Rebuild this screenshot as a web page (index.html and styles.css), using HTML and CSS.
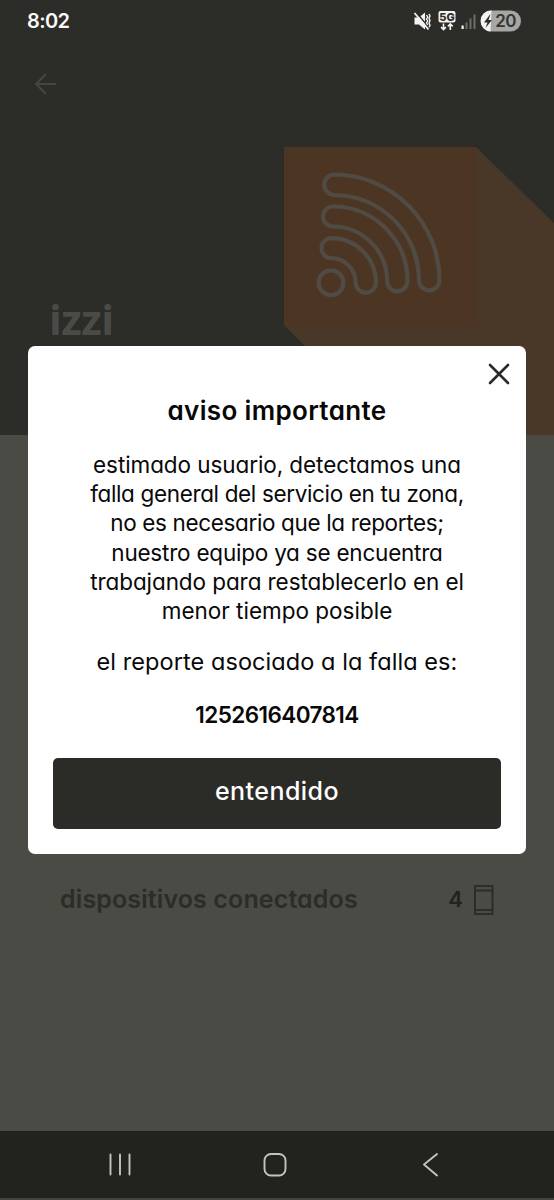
FILE: index.html
```html
<!DOCTYPE html>
<html lang="es">
<head>
<meta charset="utf-8">
<title>izzi</title>
<link rel="stylesheet" href="styles.css">
</head>
<body>
<div class="screen">
  <header class="hero">
    <div class="status">
      <span class="clock">8:02</span>
      <svg class="status-icons" width="110" height="26" viewBox="0 0 110 26">
        <path d="M3.500 9.500h4.500l6-5v17l-6-5H3.500z" fill="#f4f4f2"/>
        <path d="M5 4l14 17" stroke="#2c2c28" stroke-width="1.500"/>
        <path d="M3.500 5l14 16.500" stroke="#f4f4f2" stroke-width="1.800"/>
        <path d="M15.500 7l1.200 2-1.200 2 1.200 2-1.200 2 1.200 2M18 6l1 2-1 2.300 1 2.300-1 2.300 1 2.300-1 2" fill="none" stroke="#f4f4f2" stroke-width="1.400"/>
        <rect x="27.500" y="3" width="17" height="11.500" rx="2" fill="#f4f4f2"/>
        <text class="net" x="36" y="12.500" text-anchor="middle">5G</text>
        <path d="M32.500 15.500v6m-2.400-2.400 2.400 2.400 2.400-2.400M39.300 22v-6m-2.400 2.400 2.400-2.400 2.400 2.400" fill="none" stroke="#f4f4f2" stroke-width="1.600"/>
        <rect x="50.500" y="17.500" width="2.200" height="3.500" fill="#f4f4f2"/>
        <path d="M55.500 14.500V21M59.500 10.500V21M63.500 6.500V21" stroke="#6d6d69" stroke-width="2"/>
        <rect x="70" y="2.500" width="40" height="21" rx="10.500" fill="#a6a6a4"/>
        <path d="M80.500 2.500h-.5a10.500 10.500 0 0 0 0 21h-.5z" fill="#f4f4f2"/>
        <path d="M78 2.800v20.400" stroke="#f4f4f2"/>
        <path d="M79 6.500l-6 8h3.500l-2 5.500 6.500-8h-3.500l2-5.500z" fill="#2c2c28"/>
        <text class="charge" x="94.500" y="19" text-anchor="middle">20</text>
      </svg>
    </div>
    <svg class="back" width="24" height="24" viewBox="0 0 24 24"><path d="M22 12H2M12 2 2 12l10 10"/></svg>
    <svg class="art" width="270" height="288" viewBox="284 147 270 288">
      <path d="M284 147h192l78 76v212H393L284 325z" fill="#493728"/>
      <path d="M284 147h192v178H284z" fill="#4d3524"/>
      <g fill="none" stroke="#504b43" stroke-width="4.200">
        <circle cx="331" cy="282.700" r="12.400"/>
        <path d="M334.500 174.500A106 106 0 0 1 439.500 280a10.300 10.300 0 0 1-20.600 0A85 85 0 0 0 334.500 195a10.250 10.250 0 0 1 0-20.500z"/>
        <path d="M333 206.500A74.500 74.500 0 0 1 407.500 281a10.200 10.200 0 0 1-20.400 0A54.500 54.500 0 0 0 333 226.500a10 10 0 0 1 0-20z"/>
        <path d="M331.500 238.200A44.500 44.500 0 0 1 376 282.500a10.200 10.200 0 0 1-20.400 0A24.200 24.200 0 0 0 331.500 258.200a10 10 0 0 1 0-20z"/>
      </g>
    </svg>
    <h1 class="brand">izzi</h1>
  </header>
  <main class="content">
    <div class="devices">
      <span class="devices-label">dispositivos conectados</span>
      <span class="devices-count">4</span>
      <svg class="phone" width="20" height="32" viewBox="0 0 20 32"><path d="M1 3h17.500v28H1zM1 7.500h17.500M1 27h17.500"/></svg>
    </div>
  </main>
  <nav class="navbar">
    <svg width="554" height="67" viewBox="0 0 554 67"><g fill="none" stroke="#c4c4bf" stroke-width="1.900" stroke-linecap="round" stroke-linejoin="round"><path d="M110.500 23.500v20M120 23.500v20M129.500 23.500v20"/><rect x="264.500" y="23" width="21" height="21.500" rx="6.500"/><path d="M437 23 424 33.500 437 44.500"/></g></svg>
  </nav>
  <section class="dialog" role="dialog">
    <svg class="close" width="24" height="24" viewBox="0 0 24 24"><path d="M3 3l18 18M21 3 3 21"/></svg>
    <h2 class="title">aviso importante</h2>
    <p class="message">
      <span class="line l1">estimado usuario, detectamos una</span>
      <span class="line l2">falla general del servicio en tu zona,</span>
      <span class="line l3">no es necesario que la reportes;</span>
      <span class="line l4">nuestro equipo ya se encuentra</span>
      <span class="line l5">trabajando para restablecerlo en el</span>
      <span class="line l6">menor tiempo posible</span>
    </p>
    <p class="report">el reporte asociado a la falla es:</p>
    <p class="number">1252616407814</p>
    <button class="accept">entendido</button>
  </section>
</div>
</body>
</html>
```
FILE: styles.css
```css
* { box-sizing: border-box; margin: 0; padding: 0; }
body { font-family: Inter, "Open Sans", sans-serif; font-feature-settings: "cv11"; background: #4a4b45; }
.screen { position: relative; width: 554px; height: 1200px; overflow: hidden; display: flex; flex-direction: column; background: #4a4b45; }
.hero { position: relative; height: 435px; background: #2c2c28; }
.status { display: flex; justify-content: space-between; padding: 8px 33px 0 27px; height: 42px; }
.clock { font-size: 20px; font-weight: 600; line-height: 26px; letter-spacing: -0.6px; color: #fafaf8; }
.status-icons { display: block; }
.net { font-size: 11px; font-weight: 800; fill: #2c2c28; }
.charge { font-size: 17px; font-weight: 600; letter-spacing: -0.7px; fill: #343431; }
.back { display: block; margin: 30px 0 0 34px; fill: none; stroke: #464641; stroke-width: 2; }
.art { position: absolute; left: 284px; top: 147px; }
.brand { margin: 197px 0 0 49px; font: 700 42px/52px "Open Sans", sans-serif; letter-spacing: -0.5px; color: #4a4b46; }
.content { flex: 1; padding: 444px 60px 0; }
.devices { display: flex; align-items: center; height: 40px; color: #2c2c29; font-weight: 600; }
.devices-label { font-size: 25px; flex: 1; letter-spacing: 0.12px; white-space: nowrap; }
.devices-count { font-size: 22px; color: #22221f; margin-right: 11px; }
.phone { fill: none; stroke: #2c2c29; stroke-width: 2; }
.navbar { height: 69px; background: #22231e; border-bottom: 2px solid #43443f; }
.navbar svg { display: block; }
.dialog { position: absolute; left: 28px; top: 346px; width: 498px; height: 508px; padding: 47px 25px 25px; border-radius: 7px; background: #fff; color: #080808; text-align: center; }
.close { position: absolute; right: 15px; top: 16px; fill: none; stroke: #2a2a28; stroke-width: 2.6; stroke-linecap: round; }
.title { font-size: 26px; line-height: 36px; font-weight: 600; letter-spacing: 0.35px; }
.message { margin-top: 21px; font-size: 22.500px; line-height: 29.200px; }
.line { display: block; white-space: nowrap; }
.l1 { letter-spacing: -0.08px; }
.l2 { letter-spacing: -0.35px; }
.l3 { letter-spacing: -0.36px; }
.l4 { letter-spacing: -0.22px; }
.l5 { letter-spacing: -0.08px; }
.report { margin-top: 21px; font-size: 23.500px; line-height: 32px; letter-spacing: 0.07px; white-space: nowrap; }
.number { margin-top: 21px; font-size: 22.500px; line-height: 32px; font-weight: 600; letter-spacing: -0.58px; }
.accept { display: block; width: 448px; height: 71px; margin-top: 27px; padding-bottom: 6px; border: 0; border-radius: 5px; background: #2b2b28; color: #fff; font: 500 25px Inter, sans-serif; letter-spacing: 0.45px; }
```
